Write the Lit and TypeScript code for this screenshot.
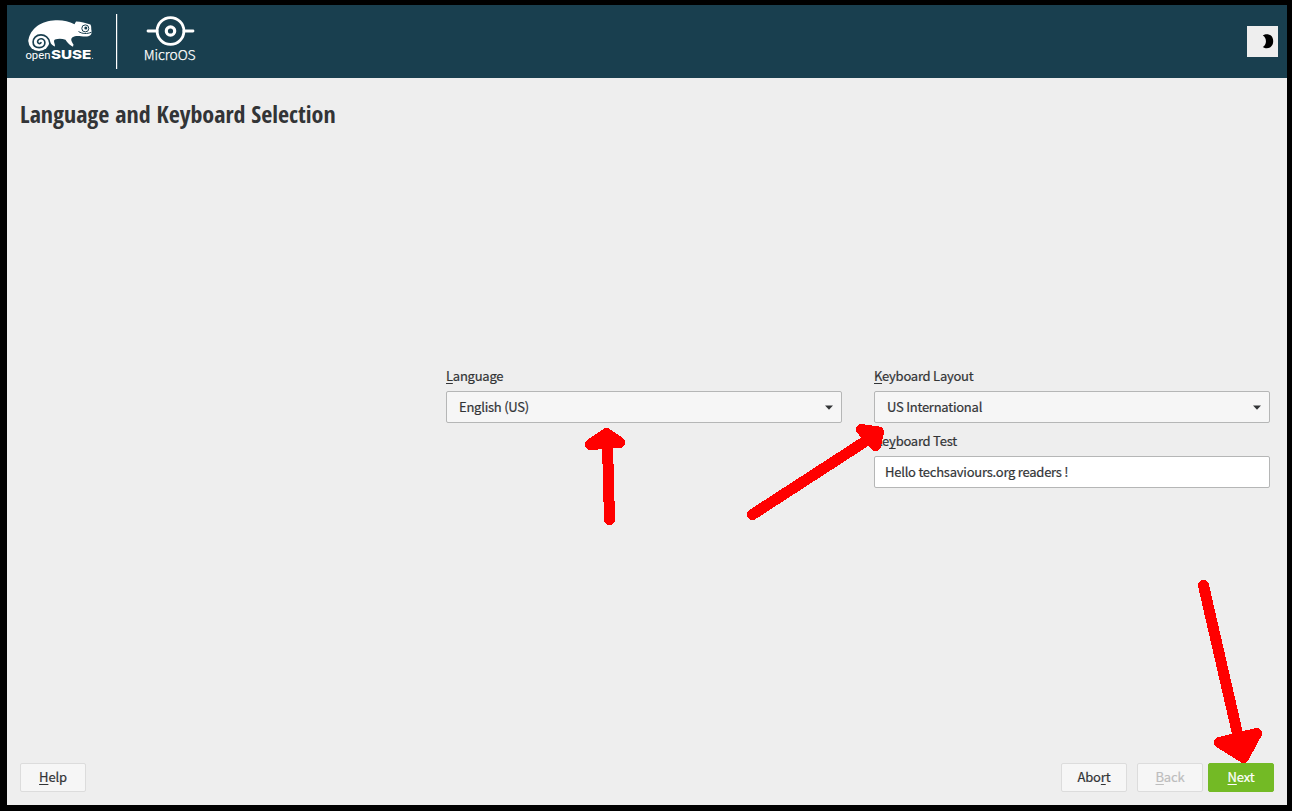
import { LitElement, html, css, svg } from "lit";
import { customElement } from "lit/decorators.js";

@customElement("app-root")
export class AppRoot extends LitElement {
  static styles = css`
    :host {
      display: block;
      position: relative;
      box-sizing: border-box;
      width: 1292px;
      height: 811px;
      padding: 5px 5px 6px 7px;
      background: #000;
      color: #323436;
      font-family: "Noto Sans CJK SC", "Noto Sans", sans-serif;
      font-size: 13px;
      line-height: 20px;
      overflow: hidden;
    }
    * {
      box-sizing: border-box;
    }
    .screen {
      display: flex;
      flex-direction: column;
      height: 100%;
      background: #eee;
    }
    .banner {
      display: flex;
      justify-content: space-between;
      align-items: center;
      flex: none;
      height: 73px;
      padding-right: 9px;
      background: #193f4f;
    }
    .logos {
      display: block;
      width: 213px;
      height: 73px;
    }
    .theme {
      display: block;
      width: 31px;
      height: 31px;
      padding: 0;
      border: 0;
      background: #eee;
    }
    .theme svg {
      display: block;
    }
    h1 {
      flex: none;
      margin: 18px 0 0 13px;
      font-family: "Open Sans Condensed", "Open Sans", sans-serif;
      font-stretch: 75%;
      font-size: 24px;
      line-height: 36px;
      font-weight: 700;
      white-space: nowrap;
    }
    .form {
      flex: 1;
      display: grid;
      grid-template-columns: 396px 396px;
      column-gap: 32px;
      justify-content: end;
      align-content: start;
      padding: 233px 17px 0 0;
      letter-spacing: -0.24px;
      -webkit-text-stroke: 0.2px;
    }
    .column {
      display: flex;
      flex-direction: column;
      gap: 7px;
    }
    .field {
      display: flex;
      flex-direction: column;
      gap: 4px;
    }
    .label {
      height: 22px;
      line-height: 22px;
    }
    .box {
      display: flex;
      align-items: center;
      justify-content: space-between;
      height: 32px;
      padding: 0 8px 0 12px;
      border: 1px solid #b5b6b6;
      border-radius: 2px;
      background: #f6f6f6;
    }
    .box.entry {
      padding-left: 10px;
      background: #fff;
    }
    .key {
      text-decoration: underline;
      text-decoration-thickness: 1px;
      text-underline-offset: 2px;
      text-decoration-skip-ink: none;
    }
    .actions {
      flex: none;
      display: flex;
      padding: 0 13px 13px;
    }
    .button {
      width: 66px;
      height: 29px;
      padding: 0 0 2px;
      border: 1px solid #dcdcdc;
      border-radius: 2px;
      background: #f6f6f6;
      color: #323436;
      font: inherit;
      line-height: 25px;
      letter-spacing: -0.15px;
      -webkit-text-stroke: 0.2px;
    }
    .abort {
      margin-left: auto;
    }
    .back {
      margin: 0 5px 0 10px;
      color: #bdbdbd;
    }
    .next {
      border-color: #73ba25;
      background: #73ba25;
      color: #fff;
    }
    .marks {
      position: absolute;
      left: 0;
      top: 0;
      pointer-events: none;
    }
  `;

  private logos() {
    return svg`
      <svg class="logos" viewBox="7 5 213 73">
        <g fill="#fff">
          <ellipse cx="38.9" cy="42" rx="10.4" ry="8.9"/>
          <path d="M28.4 42C28.6 31 39 21.5 53 20.5C61 19.7 68 20.8 74.5 24.3L76 21.4C80 21.3 86 22.8 90.4 24.6C91.8 26.5 90.8 28.5 91.6 31.2C91.8 35 90 36.4 85.5 36.5C80 36.4 76 35 72.5 37.3C70.5 39 71 41 73.5 44.5L73 46.7C70.5 45.9 68.4 43.5 66.5 41.3L65.5 39.7C62 38.6 58 38.6 55 39.5C53.5 40.3 54 42 54.8 44.5L55 46.5C51.5 45.5 50 41.5 48.5 40.2C46 38 43 36 39.5 36L33 36Z"/>
        </g>
        <path d="M49.6 42.4C49 37.5 45 34.9 41 34.9C36 34.9 33.1 38.5 33.1 42.1C33.1 45.9 36 47.6 39.2 47.6C43 47.6 44.9 45.2 44.9 42.7C44.9 40.1 43 38.7 41 38.8C38.6 38.9 37.2 40.7 37.7 42.3C38.2 43.9 40.3 44 41 42.7" fill="none" stroke="#193f4f" stroke-width="1.65" stroke-linecap="round"/>
        <circle cx="85.3" cy="28.4" r="3.5" fill="#fff" stroke="#193f4f" stroke-width="1"/>
        <circle cx="85.8" cy="28" r="1.5" fill="#193f4f"/>
        <path d="M78.5 31.5C82.5 34 87 34.1 91.5 32.2" fill="none" stroke="#193f4f" stroke-width="1"/>
        <text x="25.4" y="59.2" textLength="25" lengthAdjust="spacingAndGlyphs" fill="#fff" font-family="Roboto, sans-serif" font-size="11.8">open</text>
        <text x="51" y="59.2" textLength="40.4" lengthAdjust="spacingAndGlyphs" fill="#fff" font-family="Inter, sans-serif" font-weight="800" font-size="12.4">SUSE</text>
        <circle cx="92.6" cy="58.4" r=".6" fill="#fff" opacity=".7"/>
        <rect x="116" y="14" width="1.2" height="55" fill="#fff"/>
        <g fill="none" stroke="#fff">
          <circle cx="170.5" cy="31" r="13.4" stroke-width="2.8"/>
          <circle cx="170.5" cy="31" r="4.2" stroke-width="3.2"/>
          <path d="M148 31H157M184 31H193" stroke-width="2.8" stroke-linecap="round"/>
        </g>
        <text x="143.8" y="60" textLength="51.8" fill="#fff" stroke="#fff" stroke-width=".25" font-family="Noto Sans CJK SC, sans-serif" font-weight="300" font-size="13.8">MicroOS</text>
      </svg>
    `;
  }

  private combo(value: string) {
    return html`
      <div class="box">
        <span>${value}</span>
        <svg width="8" height="5" viewBox="0 0 8 5"><path d="M0 .5H8L4 4.7Z" fill="#323436" /></svg>
      </div>
    `;
  }

  render() {
    return html`
      <div class="screen">
        <header class="banner">
          ${this.logos()}
          <button class="theme" aria-label="Dark theme">
            <svg width="31" height="31" viewBox="0 0 31 31">
              <path d="M15.8 9.5C18.5 7.4 22 8 23.9 9.5C25.4 10.8 26.2 12.8 26.2 15.3C26.2 18 25 20.3 23 21.5C21 22.6 18 22.7 15.8 21C20 18.6 20 12 15.8 9.5Z" fill="#000" />
            </svg>
          </button>
        </header>
        <h1>Language and Keyboard Selection</h1>
        <main class="form">
          <div class="column">
            <div class="field">
              <div class="label"><span class="key">L</span>anguage</div>
              ${this.combo("English (US)")}
            </div>
          </div>
          <div class="column">
            <div class="field">
              <div class="label"><span class="key">K</span>eyboard Layout</div>
              ${this.combo("US International")}
            </div>
            <div class="field">
              <div class="label">Ke<span class="key">y</span>board Test</div>
              <div class="box entry">Hello techsaviours.org readers !</div>
            </div>
          </div>
        </main>
        <footer class="actions">
          <button class="button"><span class="key">H</span>elp</button>
          <button class="button abort">Abo<span class="key">r</span>t</button>
          <button class="button back" disabled><span class="key">B</span>ack</button>
          <button class="button next"><span class="key">N</span>ext</button>
        </footer>
      </div>
      <svg class="marks" width="1292" height="811" viewBox="0 0 1292 811" shape-rendering="crispEdges">
        <g fill="#f00" stroke="#f00" stroke-width="11" stroke-linecap="round" stroke-linejoin="round">
          <path d="M609.5 519.5L607.5 445" />
          <path d="M606.5 433.5L590.5 444.5L619.5 442.5Z" />
          <path d="M752.5 514.5L872 437" />
          <path d="M861.5 429.5L878.5 432L875.5 445.5Z" />
          <path d="M1203.5 585.5L1238.5 738" />
          <path d="M1243.5 757.5L1219.5 742.5L1256.5 733.5Z" />
        </g>
      </svg>
    `;
  }
}
